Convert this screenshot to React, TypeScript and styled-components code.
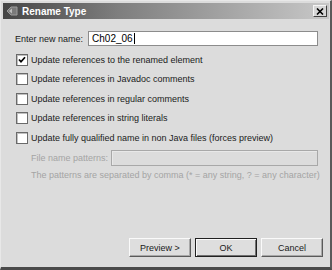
import React from 'react';
import styled, { createGlobalStyle, css } from 'styled-components';

const GlobalStyle = createGlobalStyle`
    html, body {
        margin: 0;
        padding: 0;
        background: #dcdcdc;
        overflow: hidden;
    }
    body {
        font-family: "Liberation Sans", Arial, sans-serif;
        font-size: 9px;
        color: #1a1a1a;
    }
`;

const Window = styled.div`
    box-sizing: border-box;
    width: 332px;
    height: 270px;
    display: flex;
    flex-direction: column;
    background: #dcdcdc;
    border-top: 1px solid #e8e8e8;
    border-left: 1px solid #e8e8e8;
    border-right: 2px solid #5a5a5a;
    border-bottom: 3px solid #4a4a4a;
    padding: 2px 1px 0 2px;
`;

const TitleBar = styled.div`
    height: 16px;
    display: flex;
    align-items: center;
    gap: 3px;
    padding: 0 2px 0 2px;
    background: linear-gradient(to right, #464646 0%, #7e7e7e 35%, #c8c8c8 100%);
`;

const TitleText = styled.span`
    flex: 1;
    color: #ffffff;
    font-weight: bold;
    font-size: 10px;
`;

const CloseButton = styled.div`
    box-sizing: border-box;
    width: 14px;
    height: 12px;
    display: flex;
    align-items: center;
    justify-content: center;
    background: #d6d6d6;
    border-top: 1px solid #f4f4f4;
    border-left: 1px solid #f4f4f4;
    border-right: 1px solid #404040;
    border-bottom: 1px solid #404040;
`;

const Body = styled.div`
    flex: 1;
    display: flex;
    flex-direction: column;
    padding: 12px 11px 10px 12px;
    white-space: nowrap;
`;

const NameRow = styled.div`
    display: flex;
    align-items: center;
    gap: 5px;
    height: 15px;
`;

const TextField = styled.div<{ $disabled?: boolean }>`
    box-sizing: border-box;
    flex: 1;
    height: ${p => (p.$disabled ? 16 : 15)}px;
    display: flex;
    align-items: center;
    padding-left: 3px;
    font-size: 10px;
    color: #000;
    background: ${p => (p.$disabled ? '#dcdcdc' : '#ffffff')};
    border: 1px solid #8c8c8c;
    ${p => p.$disabled && css`
        border-color: #a8a8a8;
        box-shadow: inset 1px 1px 0 #e8e8e8;
    `}
`;

const Caret = styled.span`
    display: inline-block;
    width: 1px;
    height: 11px;
    margin-left: 1px;
    background: #000;
`;

const Options = styled.div`
    display: flex;
    flex-direction: column;
    gap: 6.5px;
    margin-top: 7px;
`;

const OptionRow = styled.label`
    display: flex;
    align-items: center;
    gap: 3px;
    height: 13px;
    padding-left: 1px;
`;

const Box = styled.span`
    box-sizing: border-box;
    width: 12px;
    height: 12px;
    display: flex;
    align-items: center;
    justify-content: center;
    background: #ffffff;
    border: 1px solid #6a6a6a;
    box-shadow: inset 1px 1px 0 #c0c0c0;
`;

const PatternBlock = styled.div`
    display: flex;
    flex-direction: column;
    gap: 4px;
    margin-top: 6px;
    padding-left: 16px;
    color: #a4a4a4;
`;

const PatternRow = styled.div`
    display: flex;
    align-items: center;
    gap: 3px;
`;

const Spacer = styled.div`
    flex: 1;
`;

const ButtonRow = styled.div`
    display: flex;
    justify-content: flex-end;
    gap: 4px;
    margin-right: -5px;
`;

const Button = styled.div<{ $default?: boolean }>`
    box-sizing: border-box;
    width: 62px;
    height: 19px;
    display: flex;
    align-items: center;
    justify-content: center;
    font-size: 9px;
    color: #1a1a1a;
    background: #dedede;
    border-top: 1px solid #fafafa;
    border-left: 1px solid #fafafa;
    border-right: 1px solid #5a5a5a;
    border-bottom: 1px solid #5a5a5a;
    box-shadow: inset -1px -1px 0 #a8a8a8;
    ${p => p.$default && css`
        border: 1px solid #202020;
        box-shadow: inset 1px 1px 0 #fafafa, inset -1px -1px 0 #707070;
    `}
`;

const WindowIcon = () => (
    <svg width="14" height="14" viewBox="0 0 14 14">
        <path d="M2 7 L6 3 L12 3 L12 11 L6 11 Z" fill="#7a7a7a" stroke="#9c9c9c" strokeWidth="1" />
        <path d="M4 7 L7 4.5 L7 9.5 Z" fill="#bdbdbd" />
    </svg>
);

const CloseIcon = () => (
    <svg width="8" height="7" viewBox="0 0 8 7">
        <path d="M1 0.5 L7 6.5 M7 0.5 L1 6.5" stroke="#000" strokeWidth="1.6" />
    </svg>
);

const CheckMark = () => (
    <svg width="8" height="8" viewBox="0 0 8 8">
        <path d="M1 3.5 L3 5.8 L7 1.2" fill="none" stroke="#000" strokeWidth="1.7" />
    </svg>
);

const options = [
    { label: 'Update references to the renamed element', checked: true },
    { label: 'Update references in Javadoc comments', checked: false },
    { label: 'Update references in regular comments', checked: false },
    { label: 'Update references in string literals', checked: false },
    { label: 'Update fully qualified name in non Java files (forces preview)', checked: false },
];

export default function App() {
    return (
        <>
            <GlobalStyle />
            <Window>
                <TitleBar>
                    <WindowIcon />
                    <TitleText>Rename Type</TitleText>
                    <CloseButton>
                        <CloseIcon />
                    </CloseButton>
                </TitleBar>
                <Body>
                    <NameRow>
                        <span>Enter new name:</span>
                        <TextField>
                            Ch02_06<Caret />
                        </TextField>
                    </NameRow>
                    <Options>
                        {options.map(option => (
                            <OptionRow key={option.label}>
                                <Box>{option.checked && <CheckMark />}</Box>
                                <span>{option.label}</span>
                            </OptionRow>
                        ))}
                    </Options>
                    <PatternBlock>
                        <PatternRow>
                            <span>File name patterns:</span>
                            <TextField $disabled />
                        </PatternRow>
                        <span>The patterns are separated by comma (* = any string, ? = any character)</span>
                    </PatternBlock>
                    <Spacer />
                    <ButtonRow>
                        <Button>Preview &gt;</Button>
                        <Button $default>OK</Button>
                        <Button>Cancel</Button>
                    </ButtonRow>
                </Body>
            </Window>
        </>
    );
}
